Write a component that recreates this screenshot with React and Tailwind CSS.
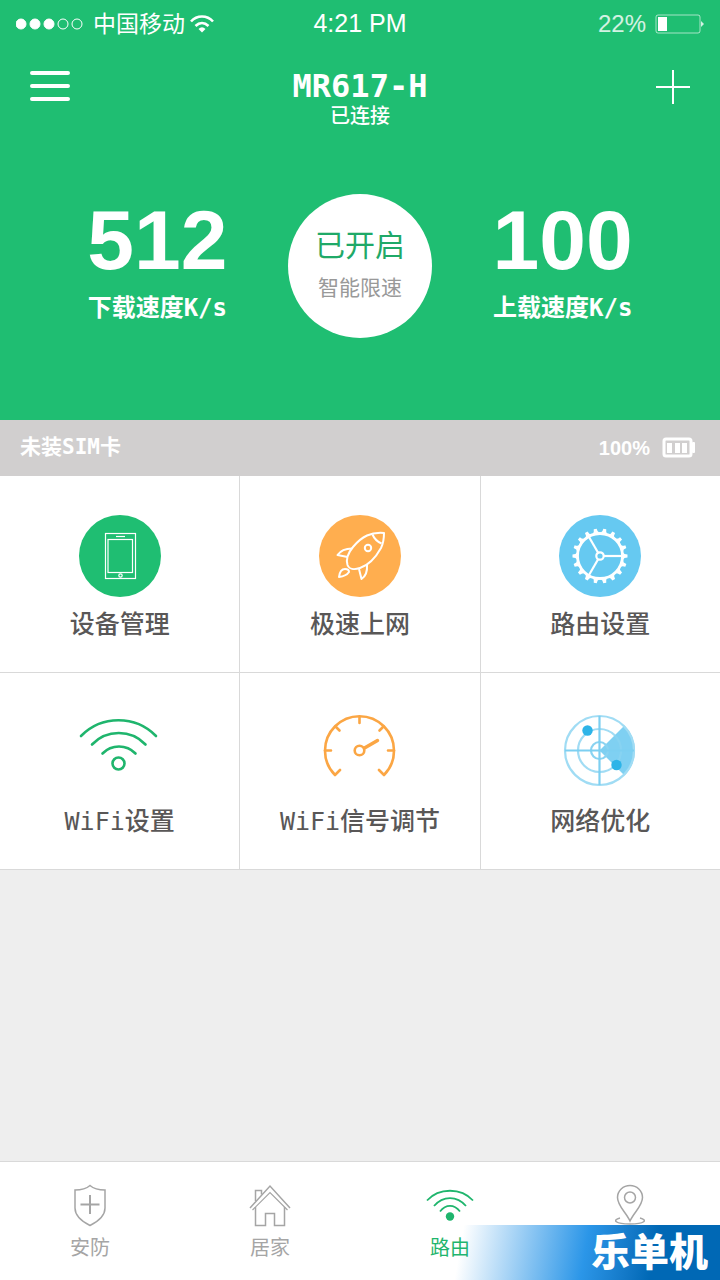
import { useState } from 'react';

const monoFont = 'font-["DejaVu_Sans_Mono","Noto_Sans_CJK_SC",monospace]';
const sansFont = 'font-["Liberation_Sans","Noto_Sans_CJK_SC",sans-serif]';

function StatusBar() {
  return (
    <div className="flex h-12 items-center px-4 text-2xl">
      <div className="flex flex-1 items-center">
        <svg width="69" height="12" viewBox="0 0 69 12" fill="#fff" stroke="#fff">
          <circle cx="5" cy="6" r="5" />
          <circle cx="19" cy="6" r="5" />
          <circle cx="33" cy="6" r="5" />
          <circle cx="47" cy="6" r="5" fill="none" />
          <circle cx="61" cy="6" r="5" fill="none" />
        </svg>
        <span className="ml-2 text-[23px]">中国移动</span>
        <svg className="ml-1" width="26" height="20" viewBox="0 0 26 20" fill="none" stroke="#fff" strokeWidth="2.600">
          <path d="M2 7.500C8 0.800 18 0.800 24 7.500" />
          <path d="M6.500 12C10.500 8 15.500 8 19.500 12" />
          <path d="M9.500 15Q13 11.500 16.500 15L13 18.500Z" fill="#fff" stroke="none" />
        </svg>
      </div>
      <span className="text-[25px]">4:21 PM</span>
      <div className="flex flex-1 items-center justify-end gap-2">
        <span className="text-white/80">22%</span>
        <svg width="50" height="22" viewBox="0 0 50 22" fill="none">
          <rect x="2" y="2" width="44" height="18" rx="2" stroke="#fff" strokeOpacity="0.6" />
          <rect x="4" y="4" width="9" height="14" fill="#fff" />
          <path d="M47 8L50 11L47 14Z" fill="#fff" fillOpacity="0.8" />
        </svg>
      </div>
    </div>
  );
}

function Speed({ value, label }) {
  return (
    <div className="flex flex-col items-center">
      <span className={`text-[84px] leading-[92px] font-bold ${sansFont}`}>{value}</span>
      <span className={`mt-1 text-2xl leading-9 font-bold whitespace-nowrap ${monoFont}`}>{label}</span>
    </div>
  );
}

function PhoneIcon() {
  return (
    <svg width="82" height="82" viewBox="0 0 82 82" fill="none" stroke="#fff" strokeWidth="1.2">
      <circle cx="41" cy="41" r="41" fill="#1fbe72" stroke="none" />
      <rect x="26.500" y="18.500" width="30" height="45" />
      <rect x="29" y="24.500" width="24.500" height="33" />
      <path d="M37 21.500H46" />
      <circle cx="41.500" cy="60.500" r="1.700" />
    </svg>
  );
}

function RocketIcon() {
  return (
    <svg width="82" height="82" viewBox="0 0 82 82" fill="none" stroke="#fff" strokeWidth="2" strokeLinejoin="round">
      <circle cx="41" cy="41" r="41" fill="#ffae4f" stroke="none" />
      <path d="M65 18C52 17 43 21 34 32C29 38 27 45 28.500 50C30 54 35 55 41 53C50 50 57 42 62 33C65 27 65 23 65 18Z" />
      <path d="M53.500 19.500Q56 25.500 62.500 28.500" />
      <circle cx="49" cy="33" r="3.200" />
      <path d="M33 33.500C26 33.500 22 35 18.500 40L28.500 42" />
      <path d="M40 54L42.500 64C47 61 48.500 57 48 50" />
      <path d="M20 62C20.500 58 22 54 26 54Q30 54 30 57C28 60 24 61.500 20 62Z" />
    </svg>
  );
}

function GearIcon() {
  const teeth = Array.from({ length: 18 }, (_, i) => i * 20);
  return (
    <svg width="82" height="82" viewBox="0 0 82 82" fill="none" stroke="#fff" strokeWidth="2.200">
      <circle cx="41" cy="41" r="41" fill="#66c9f1" stroke="none" />
      <circle cx="41" cy="41" r="22.500" strokeWidth="2.800" />
      <circle cx="41" cy="41" r="3.700" />
      {[0, 120, 240].map((angle) => (
        <path key={angle} d="M44.500 41H63" transform={`rotate(${angle} 41 41)`} />
      ))}
      {teeth.map((angle) => (
        <path
          key={angle}
          d="M64 37.500Q65 39.500 68.500 39.500V42.500Q65 42.500 64 44.500Z"
          fill="#fff"
          stroke="none"
          transform={`rotate(${angle} 41 41)`}
        />
      ))}
    </svg>
  );
}

function WifiIcon() {
  return (
    <svg width="82" height="82" viewBox="1 3 82 82" fill="none" stroke="#1fb56d" strokeWidth="2.600" strokeLinecap="round">
      <path d="M3 27A52.600 52.600 0 0 1 78 27" />
      <path d="M14 35.500A37 37 0 0 1 67.500 35.500" />
      <path d="M24.500 44.500A23 23 0 0 1 57.500 44.500" />
      <circle cx="40.500" cy="54.500" r="6" />
    </svg>
  );
}

function GaugeIcon() {
  return (
    <svg width="82" height="82" viewBox="0 3 82 82" fill="none" stroke="#fba644" strokeWidth="2.600" strokeLinecap="round" strokeLinejoin="round">
      <path d="M21 61L16 66A34.500 34.500 0 1 1 65 66L60 61" />
      <path d="M40.500 8V14M6 41.500H12M75 41.500H69M16.500 17.500L20.500 21.500M64.500 17.500L60.500 21.500" />
      <circle cx="40.500" cy="41.500" r="4.800" />
      <path d="M45.500 39L58.500 31.500" strokeWidth="3.500" />
    </svg>
  );
}

function RadarIcon() {
  return (
    <svg width="82" height="82" viewBox="0 3 82 82" fill="none" stroke="#a0dcf4" strokeWidth="2.200">
      <path d="M40.500 41.500L65.500 16.500A35 35 0 0 1 65.500 66.500Z" fill="#7fd0f2" stroke="none" />
      <circle cx="40.500" cy="41.500" r="34.500" />
      <circle cx="40.500" cy="41.500" r="21.500" strokeOpacity="0.800" stroke="#8ad3f1" />
      <circle cx="40.500" cy="41.500" r="8.500" stroke="#8ad3f1" />
      <path d="M40.500 7V76M6 41.500H75" stroke="#7dcff1" />
      <circle cx="28.500" cy="21.500" r="5.200" fill="#2db4e8" stroke="none" />
      <circle cx="57.500" cy="56" r="5.200" fill="#2db4e8" stroke="none" />
    </svg>
  );
}

function ShieldIcon() {
  return (
    <svg width="48" height="44" viewBox="0 0 48 44" fill="none" stroke="currentColor" strokeWidth="1.500">
      <path d="M24 2.500C20 6 15 7 9 7V25C9 33 15 38 24 42.500C33 38 39 33 39 25V7C33 7 28 6 24 2.500Z" />
      <path d="M24 12V31M14.500 21.500H33.500" strokeWidth="2" />
    </svg>
  );
}

function HouseIcon() {
  return (
    <svg width="48" height="44" viewBox="0 0 48 44" fill="none" stroke="currentColor" strokeWidth="1.500">
      <path d="M4 25L24 3L44 25" />
      <path d="M6.500 27L24 9.500L41.500 27" strokeWidth="1.200" />
      <path d="M9.500 24V42.500H19.500V30.500H28.500V42.500H38.500V24" />
      <path d="M9.500 18V7.500H15.500V11.500" />
    </svg>
  );
}

function SmallWifiIcon() {
  return (
    <svg width="48" height="44" viewBox="0 0 48 44" fill="none" stroke="currentColor" strokeWidth="1.800">
      <path d="M1 17.500C13 4.500 35 4.500 47 17.500" />
      <path d="M8 23C17 12.500 31 12.500 40 23" />
      <path d="M14 28.500C20 21 28 21 34 28.500" />
      <circle cx="24" cy="33.500" r="4.200" fill="currentColor" stroke="none" />
    </svg>
  );
}

function PinIcon() {
  return (
    <svg width="48" height="44" viewBox="0 0 48 44" fill="none" stroke="currentColor" strokeWidth="1.500">
      <path d="M24 38C20 29 11.500 23 11.500 14.500A12.500 12 0 0 1 36.500 14.500C36.500 23 28 29 24 38Z" />
      <circle cx="24" cy="14.500" r="5.500" />
      <path d="M14 35C6 37 9 41 24 41S42 37 34 35" />
    </svg>
  );
}

const features = [
  { label: '设备管理', icon: <PhoneIcon /> },
  { label: '极速上网', icon: <RocketIcon /> },
  { label: '路由设置', icon: <GearIcon /> },
  { label: 'WiFi设置', icon: <WifiIcon /> },
  { label: 'WiFi信号调节', icon: <GaugeIcon /> },
  { label: '网络优化', icon: <RadarIcon /> },
];

const tabs = [
  { id: 'security', label: '安防', icon: <ShieldIcon /> },
  { id: 'home', label: '居家', icon: <HouseIcon /> },
  { id: 'router', label: '路由', icon: <SmallWifiIcon /> },
  { id: 'location', label: '', icon: <PinIcon /> },
];

export default function App() {
  const [activeTab, setActiveTab] = useState('router');

  return (
    <div className={`relative flex min-h-screen flex-col bg-[#eeeeee] ${sansFont}`}>
      {/* Header */}
      <header className="bg-[#1fbe72] pb-[82px] text-white">
        <StatusBar />
        <div className="flex items-start justify-between px-[30px] pt-[22px]">
          <button type="button" aria-label="菜单">
            <svg width="40" height="32" viewBox="0 0 40 32" stroke="#fff" strokeWidth="4" strokeLinecap="round">
              <path d="M2 3H38M2 16H38M2 29H38" />
            </svg>
          </button>
          <div className="flex flex-col items-center">
            <h1 className={`text-[32px] leading-8 font-bold ${monoFont}`}>MR617-H</h1>
            <p className="text-xl leading-7 font-medium">已连接</p>
          </div>
          <button type="button" aria-label="添加" className="flex w-10 justify-end">
            <svg width="34" height="34" viewBox="0 0 34 34" stroke="#fff" strokeWidth="2">
              <path d="M17 0V34M0 17H34" />
            </svg>
          </button>
        </div>

        <div className="mt-16 grid grid-cols-3 px-14">
          <Speed value="512" label="下载速度K/s" />
          <button
            type="button"
            className="flex size-36 flex-col items-center justify-center gap-3 justify-self-center rounded-full bg-white"
          >
            <span className="text-[30px] leading-8 text-[#1fa968]">已开启</span>
            <span className="text-[21px] leading-7 text-[#999999]">智能限速</span>
          </button>
          <Speed value="100" label="上载速度K/s" />
        </div>
      </header>

      {/* SIM and battery */}
      <div className="flex h-14 items-center justify-between bg-[#d1cfcf] px-5 text-xl font-bold text-white">
        <span className={`text-[21px] ${monoFont}`}>未装SIM卡</span>
        <div className="flex items-center gap-3 pr-1">
          <span>100%</span>
          <svg width="34" height="22" viewBox="0 0 34 22" fill="#fff">
            <rect x="2" y="2" width="27" height="17" rx="2" fill="none" stroke="#fff" strokeWidth="3" />
            <rect x="5" y="6" width="5" height="10" />
            <rect x="13" y="6" width="5" height="10" />
            <rect x="20" y="6" width="5" height="10" />
            <rect x="30" y="5" width="3" height="11" rx="1" />
          </svg>
        </div>
      </div>

      {/* Features */}
      <main className="grid grid-cols-3 gap-px border-b border-[#d9d9d9] bg-[#d9d9d9]">
        {features.map((feature) => (
          <button
            key={feature.label}
            type="button"
            className="flex h-[196px] flex-col items-center bg-white pt-[39px] text-[25px] leading-8 font-medium text-[#595757]"
          >
            {feature.icon}
            <span className={`mt-3 ${monoFont}`}>{feature.label}</span>
          </button>
        ))}
      </main>

      {/* Tabs */}
      <nav className="mt-auto grid h-[119px] grid-cols-4 border-t border-[#d9d9d9] bg-white">
        {tabs.map((tab) => (
          <button
            key={tab.id}
            type="button"
            aria-label={tab.label || '定位'}
            onClick={() => setActiveTab(tab.id)}
            className={`flex flex-col items-center gap-[7px] pt-[21px] text-xl leading-7 ${
              activeTab === tab.id ? 'text-[#1fb56d]' : 'text-[#a5a5a5]'
            }`}
          >
            {tab.icon}
            <span>{tab.label}</span>
          </button>
        ))}
      </nav>

      {/* Brand ribbon */}
      <div className="pointer-events-none absolute right-0 bottom-0 flex h-[55px] w-3/8 items-center justify-end bg-linear-100 from-transparent from-5% via-[#2b96e8] via-50% to-[#0068b5] to-75% pr-3">
        <span className="text-[39px] leading-none font-black text-white">乐单机</span>
      </div>
    </div>
  );
}
